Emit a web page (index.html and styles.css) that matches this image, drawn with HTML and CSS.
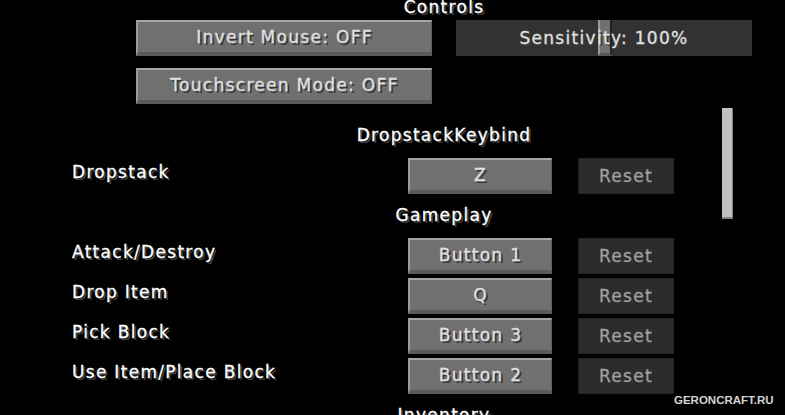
FILE: index.html
```html
<!DOCTYPE html>
<html lang="en">
<head>
    <meta charset="UTF-8">
    <meta name="viewport" content="width=device-width, initial-scale=1.0">
    <title>Controls</title>
    <link rel="stylesheet" href="styles.css">
</head>
<body>
    <div class="screen">
        <h1 class="title">Controls</h1>
        <div class="options">
            <div class="btn">Invert Mouse: OFF</div>
            <div class="slider">
                <span class="handle"></span>
                <span class="slider-label">Sensitivity: 100%</span>
            </div>
            <div class="btn">Touchscreen Mode: OFF</div>
        </div>

        <div class="keylist">
            <div class="scrollbar"></div>
            <div class="category">DropstackKeybind</div>
            <div class="keyrow">
                <span class="keyname">Dropstack</span>
                <div class="btn key">Z</div>
                <div class="btn reset">Reset</div>
            </div>
            <div class="category">Gameplay</div>
            <div class="keyrow">
                <span class="keyname">Attack/Destroy</span>
                <div class="btn key">Button 1</div>
                <div class="btn reset">Reset</div>
            </div>
            <div class="keyrow">
                <span class="keyname">Drop Item</span>
                <div class="btn key">Q</div>
                <div class="btn reset">Reset</div>
            </div>
            <div class="keyrow">
                <span class="keyname">Pick Block</span>
                <div class="btn key">Button 3</div>
                <div class="btn reset">Reset</div>
            </div>
            <div class="keyrow">
                <span class="keyname">Use Item/Place Block</span>
                <div class="btn key">Button 2</div>
                <div class="btn reset">Reset</div>
            </div>
            <div class="category">Inventory</div>
        </div>

        <div class="watermark">GERONCRAFT.RU</div>
    </div>
</body>
</html>
```

FILE: styles.css
```css
body {
    margin: 0;
    width: 785px;
    height: 415px;
    overflow: hidden;
    background: #000;
    color: #fff;
    font-family: "DejaVu Sans", sans-serif;
    font-size: 17px;
    letter-spacing: 1.3px;
    -webkit-text-stroke: 0.3px currentColor;
}
.screen {
    position: relative;
    height: 415px;
}
.title {
    margin: 0;
    height: 20px;
    padding-left: 103px;
    font-size: 17px;
    font-weight: normal;
    line-height: 14px;
    text-align: center;
    text-shadow: 2px 2px #3f3f3f;
}
.options {
    display: grid;
    grid-template-columns: 296px 296px;
    grid-auto-rows: 36px;
    column-gap: 24px;
    row-gap: 12px;
    margin-left: 136px;
}
.btn {
    display: flex;
    align-items: center;
    justify-content: center;
    box-sizing: border-box;
    height: 36px;
    line-height: 14px;
    background: #707070;
    border-top: 2px solid #a6a6a6;
    border-left: 2px solid #9a9a9a;
    border-bottom: 4px solid #5a5a5a;
    border-right: 1px solid #5e5e5e;
    color: #e0e0e0;
    text-shadow: 2px 2px #383838;
    white-space: nowrap;
}
.slider {
    position: relative;
    display: flex;
    align-items: center;
    justify-content: center;
    height: 36px;
    line-height: 14px;
    background: #323232;
    color: #e0e0e0;
    text-shadow: 2px 2px #383838;
}
.slider-label {
    position: relative;
}
.handle {
    position: absolute;
    top: 0;
    left: 142px;
    width: 14px;
    height: 36px;
    box-sizing: border-box;
    background: #707070;
    border-left: 2px solid #9a9a9a;
    border-right: 2px solid #222;
    border-bottom: 3px solid #575757;
}
.keylist {
    position: relative;
    margin-top: 14px;
}
.scrollbar {
    position: absolute;
    left: 722px;
    top: -10px;
    width: 11px;
    height: 111px;
    background: #c0c0c0;
    border-right: 1px solid #808080;
    border-bottom: 2px solid #808080;
    box-sizing: border-box;
}
.category {
    box-sizing: border-box;
    height: 40px;
    padding-top: 10px;
    padding-left: 103px;
    line-height: 14px;
    text-align: center;
    text-shadow: 2px 2px #3f3f3f;
}
.keyrow {
    display: flex;
    align-items: flex-start;
    height: 40px;
    padding-left: 72px;
}
.keyname {
    width: 336px;
    padding-top: 7px;
    line-height: 14px;
    text-shadow: 2px 2px #3f3f3f;
}
.key {
    width: 144px;
    margin-right: 26px;
}
.reset {
    width: 96px;
    background: #2c2c2c;
    border: 1px solid #222;
    color: #a0a0a0;
    text-shadow: none;
}
.watermark {
    position: absolute;
    left: 674px;
    top: 394px;
    font-family: "Liberation Sans", Arial, sans-serif;
    font-size: 11.5px;
    font-weight: bold;
    letter-spacing: 0;
    -webkit-text-stroke: 0;
    color: #d4d4d4;
}
```
